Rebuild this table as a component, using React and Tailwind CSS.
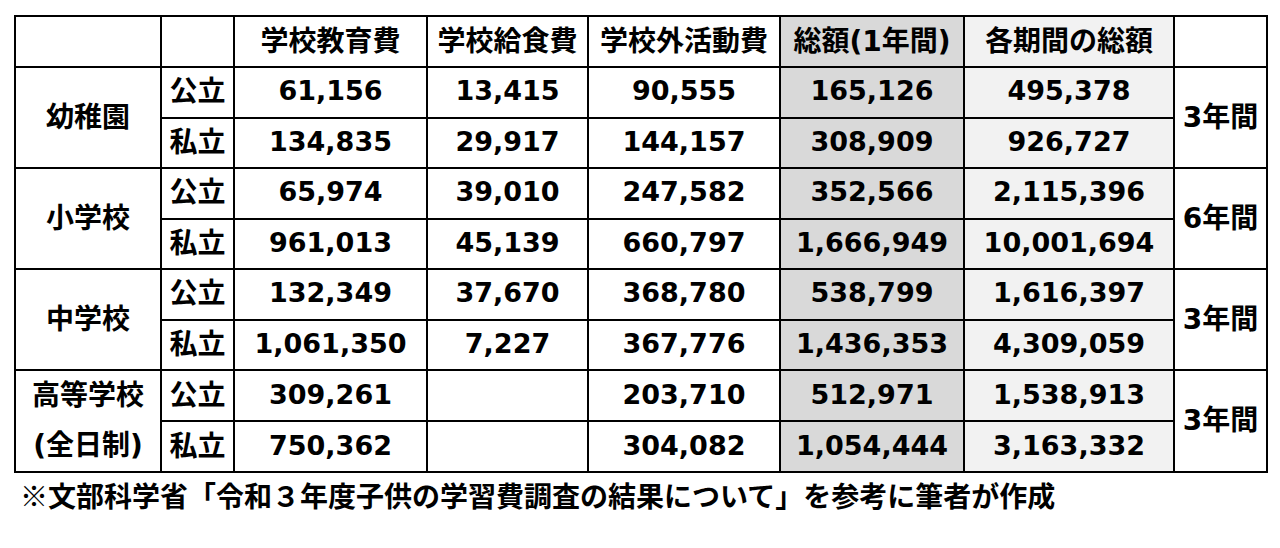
import React from "react";

const groups = [
  {
    name: ["幼稚園"],
    period: "3年間",
    rows: [
      ["公立", "61,156", "13,415", "90,555", "165,126", "495,378"],
      ["私立", "134,835", "29,917", "144,157", "308,909", "926,727"],
    ],
  },
  {
    name: ["小学校"],
    period: "6年間",
    rows: [
      ["公立", "65,974", "39,010", "247,582", "352,566", "2,115,396"],
      ["私立", "961,013", "45,139", "660,797", "1,666,949", "10,001,694"],
    ],
  },
  {
    name: ["中学校"],
    period: "3年間",
    rows: [
      ["公立", "132,349", "37,670", "368,780", "538,799", "1,616,397"],
      ["私立", "1,061,350", "7,227", "367,776", "1,436,353", "4,309,059"],
    ],
  },
  {
    name: ["高等学校", "(全日制)"],
    period: "3年間",
    rows: [
      ["公立", "309,261", "", "203,710", "512,971", "1,538,913"],
      ["私立", "750,362", "", "304,082", "1,054,444", "3,163,332"],
    ],
  },
];

const cell = "border-2 border-black text-center align-middle p-0 whitespace-nowrap";
const num = "border-2 border-black text-center align-middle px-0 pt-0 pb-[3px] whitespace-nowrap text-[27px]";

export default function App() {
  return (
    <div
      className="w-[1280px] h-[548px] bg-white text-black font-bold overflow-hidden"
      style={{ fontFamily: '"Noto Sans CJK JP", "Noto Sans", sans-serif' }}
    >
      <div className="pt-[15px] pl-[14px]">
        <table
          className="table-fixed border-collapse w-[1252px] text-[28px] leading-none"
          style={{ fontFamily: '"DejaVu Sans", "Noto Sans CJK JP", sans-serif' }}
        >
          <colgroup>
            <col className="w-[146px]" />
            <col className="w-[73px]" />
            <col className="w-[193px]" />
            <col className="w-[161px]" />
            <col className="w-[192px]" />
            <col className="w-[184px]" />
            <col className="w-[210px]" />
            <col className="w-[93px]" />
          </colgroup>
          <tbody>
            <tr className="h-[51px]">
              <td className={cell}></td>
              <td className={cell}></td>
              <td className={cell}>学校教育費</td>
              <td className={cell}>学校給食費</td>
              <td className={cell}>学校外活動費</td>
              <td className={cell + " bg-[#d9d9d9]"}>総額(1年間)</td>
              <td className={cell + " bg-[#f2f2f2]"}>各期間の総額</td>
              <td className={cell}></td>
            </tr>
            {groups.map((g, gi) =>
              g.rows.map((r, ri) => (
                <tr key={gi + "-" + ri} className="h-[50.5px]">
                  {ri === 0 && (
                    <td rowSpan={2} className={cell}>
                      {g.name.length === 1 ? (
                        g.name[0]
                      ) : (
                        <div className="flex flex-col items-center">
                          <span className="leading-[50px]">{g.name[0]}</span>
                          <span className="leading-[50px]">{g.name[1]}</span>
                        </div>
                      )}
                    </td>
                  )}
                  <td className={cell}>{r[0]}</td>
                  <td className={num}>{r[1]}</td>
                  <td className={num}>{r[2]}</td>
                  <td className={num}>{r[3]}</td>
                  <td className={num + " bg-[#d9d9d9]"}>{r[4]}</td>
                  <td className={num + " bg-[#f2f2f2]"}>{r[5]}</td>
                  {ri === 0 && (
                    <td rowSpan={2} className={cell}>
                      {g.period}
                    </td>
                  )}
                </tr>
              ))
            )}
          </tbody>
        </table>
        <div className="pl-[6px] pt-[8px] text-[28px] leading-[28px]">
          ※文部科学省「令和３年度子供の学習費調査の結果について」を参考に筆者が作成
        </div>
      </div>
    </div>
  );
}
